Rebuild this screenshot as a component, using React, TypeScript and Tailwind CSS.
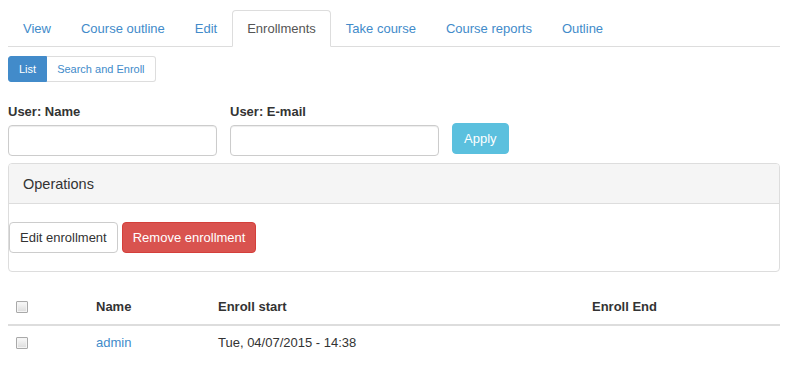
import React from "react";

const tabs = ["View", "Course outline", "Edit", "Enrollments", "Take course", "Course reports", "Outline"];

function Check() {
  return (
    <span className="block w-[12px] h-[12px] border border-[#a9a9a9] rounded-[1px] bg-gradient-to-b from-[#fafafa] to-[#dcdcdc] shadow-[inset_0_0_0_1px_#f4f4f4]" />
  );
}

export default function App() {
  return (
    <div className="w-[800px] h-[382px] bg-white text-[#333] text-[13px] leading-[18px] font-['Liberation_Sans',Arial,sans-serif] overflow-hidden">
      <div className="ml-2 w-[772px]">
        {/* Tabs */}
        <div className="mt-[10px] flex border-b border-[#ddd]">
          {tabs.map((t) => {
            const active = t === "Enrollments";
            return (
              <div
                key={t}
                className={
                  active
                    ? "-mb-px h-[37px] px-[14px] flex items-center border border-[#ddd] border-b-transparent rounded-t-[4px] bg-white text-[#555]"
                    : "-mb-px h-[37px] px-[14px] flex items-center border border-transparent text-[#428bca]"
                }
              >
                {t}
              </div>
            );
          })}
        </div>

        {/* Pills */}
        <div className="mt-[9px] flex text-[11px]">
          <div className="h-[26px] px-[10px] flex items-center bg-[#428bca] border border-[#428bca] text-white rounded-l-[3px]">
            List
          </div>
          <div className="h-[26px] px-[10px] flex items-center border border-l-0 border-[#ddd] text-[#428bca] rounded-r-[3px]">
            Search and Enroll
          </div>
        </div>

        {/* Filters */}
        <div className="mt-[21px] flex items-end gap-[13px]">
          <div className="w-[209px]">
            <div className="font-bold mb-[4px]">User: Name</div>
            <div className="h-[31px] border border-[#ccc] rounded-[4px] shadow-[inset_0_1px_1px_rgba(0,0,0,0.075)]" />
          </div>
          <div className="w-[209px]">
            <div className="font-bold mb-[4px]">User: E-mail</div>
            <div className="h-[31px] border border-[#ccc] rounded-[4px] shadow-[inset_0_1px_1px_rgba(0,0,0,0.075)]" />
          </div>
          <div className="mb-[2px] h-[31px] px-[11px] flex items-center bg-[#5bc0de] border border-[#5bc0de] rounded-[4px] text-white">
            Apply
          </div>
        </div>

        {/* Operations panel */}
        <div className="mt-[7px] border border-[#ddd] rounded-[4px]">
          <div className="h-[40px] px-[14px] flex items-center bg-[#f5f5f5] border-b border-[#ddd] rounded-t-[3px] text-[14.5px]">
            Operations
          </div>
          <div className="pt-[18px] pb-[18px] flex gap-[4px]">
            <div className="h-[31px] px-[10px] flex items-center border border-[#ccc] rounded-[4px] bg-white">
              Edit enrollment
            </div>
            <div className="h-[31px] px-[10px] flex items-center border border-[#d43f3a] rounded-[4px] bg-[#d9534f] text-white">
              Remove enrollment
            </div>
          </div>
        </div>

        {/* Table */}
        <div className="mt-[16px]">
          <div className="grid grid-cols-[80px_122px_374px_196px] border-b-2 border-[#ddd] pt-[9px] pb-[7px] font-bold leading-[20px]">
            <div className="pl-[8px] flex items-center">
              <Check />
            </div>
            <div className="pl-[8px]">Name</div>
            <div className="pl-[8px]">Enroll start</div>
            <div className="pl-[8px]">Enroll End</div>
          </div>
          <div className="grid grid-cols-[80px_122px_374px_196px] pt-[7px] pb-[8px] leading-[20px]">
            <div className="pl-[8px] flex items-center">
              <Check />
            </div>
            <div className="pl-[8px] text-[#428bca]">admin</div>
            <div className="pl-[8px]">Tue, 04/07/2015 - 14:38</div>
            <div className="pl-[8px]"></div>
          </div>
        </div>
      </div>
    </div>
  );
}
